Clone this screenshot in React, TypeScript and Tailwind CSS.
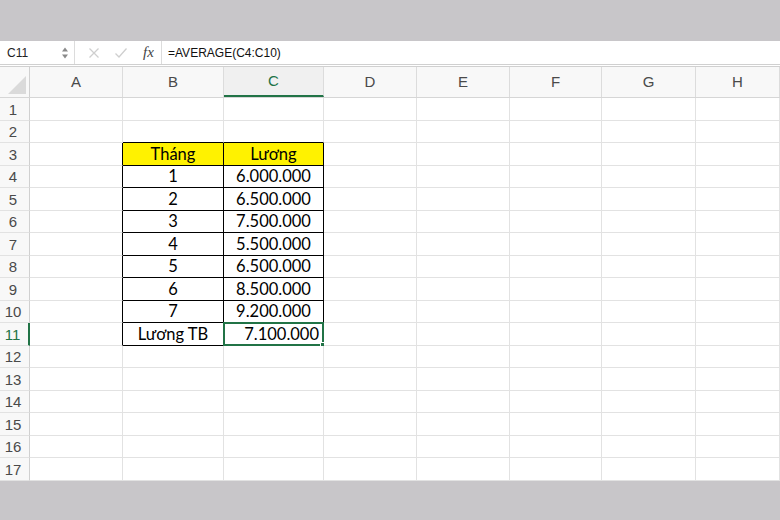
import React from "react";

const COLS = [
    { key: "A", w: "w-[93px]" },
    { key: "B", w: "w-[101px]" },
    { key: "C", w: "w-[100px]" },
    { key: "D", w: "w-[93px]" },
    { key: "E", w: "w-[93px]" },
    { key: "F", w: "w-[92px]" },
    { key: "G", w: "w-[94px]" },
    { key: "H", w: "flex-1" },
];

const DATA: Record<number, [string, string]> = {
    3: ["Tháng", "Lương"],
    4: ["1", "6.000.000"],
    5: ["2", "6.500.000"],
    6: ["3", "7.500.000"],
    7: ["4", "5.500.000"],
    8: ["5", "6.500.000"],
    9: ["6", "8.500.000"],
    10: ["7", "9.200.000"],
    11: ["Lương TB", "7.100.000"],
};

const inTable = (r: number) => r >= 3 && r <= 11;

function Cell({ row, col }: { row: number; col: string }) {
    const w = COLS.find((c) => c.key === col)!.w;
    const rightBlack = inTable(row) && (col === "A" || col === "B" || col === "C");
    const bottomBlack = row >= 2 && row <= 11 && (col === "B" || col === "C");
    const yellow = row === 3 && (col === "B" || col === "C");
    const selected = row === 11 && col === "C";
    let text = "";
    if (DATA[row] && col === "B") text = DATA[row][0];
    if (DATA[row] && col === "C") text = DATA[row][1];
    const align = selected ? "justify-end pr-[4px]" : "justify-center";

    return (
        <div
            className={`relative h-full shrink-0 flex items-end pb-[1px] ${align} border-r border-b ${w} ${
                rightBlack ? "border-r-black" : "border-r-[#e2e2e2]"
            } ${bottomBlack ? "border-b-black" : "border-b-[#e2e2e2]"} ${yellow ? "bg-[#fff200]" : "bg-white"}`}
        >
            <span className="text-[16.5px] leading-[20px] text-black">{text}</span>
            {selected && (
                <div className="absolute -left-[1px] -top-[1px] -right-[1px] -bottom-[1px] border-2 border-[#217346]">
                    <div className="absolute -right-[4px] -bottom-[4px] w-[6px] h-[6px] bg-[#217346] border border-white" />
                </div>
            )}
        </div>
    );
}

export default function App() {
    const rows = Array.from({ length: 17 }, (_, i) => i + 1);

    return (
        <div className="w-[780px] h-[520px] bg-[#c8c6c9] flex flex-col overflow-hidden [font-family:Lato,'Noto_Sans',sans-serif]">
            <div className="h-[41px] shrink-0" />

            {/* formula bar */}
            <div className="h-[23px] shrink-0 bg-white flex items-center border-b-[3px] border-double border-[#d0d0d0] box-content">
                <div className="w-[75px] h-full flex items-center justify-between pl-[7px] pr-[5px] border-r border-[#dcdcdc]">
                    <span className="text-[12px] text-[#222] [font-family:'Liberation_Sans',sans-serif]">C11</span>
                    <svg width="8" height="14" viewBox="0 0 8 14">
                        <path d="M1 5.5 L4 1.5 L7 5.5 Z" fill="#8a8a8a" />
                        <path d="M1 8.5 L4 12.5 L7 8.5 Z" fill="#8a8a8a" />
                    </svg>
                </div>
                <div className="w-[87px] h-full flex items-center pl-[13px] gap-[14px] border-r border-[#dcdcdc]">
                    <svg width="12" height="12" viewBox="0 0 12 12">
                        <path d="M1.5 1.5 L10.5 10.5 M10.5 1.5 L1.5 10.5" stroke="#cfcfcf" strokeWidth="1.3" />
                    </svg>
                    <svg width="14" height="12" viewBox="0 0 14 12">
                        <path d="M1.5 6.5 L5 10 L12.5 1.5" stroke="#cfcfcf" strokeWidth="1.3" fill="none" />
                    </svg>
                    <span className="text-[15px] italic text-[#444] [font-family:'Liberation_Serif',serif] ml-[1px]">fx</span>
                </div>
                <span className="pl-[6px] text-[12px] text-[#111] [font-family:'Liberation_Sans',sans-serif]">=AVERAGE(C4:C10)</span>
            </div>

            {/* column header */}
            <div className="h-[31px] shrink-0 flex bg-[#f8f8f8] border-b border-[#d6d6d6] [font-family:'Liberation_Sans',sans-serif]">
                <div className="w-[30px] shrink-0 relative border-r border-[#d0d0d0]">
                    <div className="absolute right-[3px] bottom-[3px] w-0 h-0 border-l-[18px] border-l-transparent border-b-[18px] border-b-[#dadada]" />
                </div>
                {COLS.map((c) => (
                    <div
                        key={c.key}
                        className={`${c.w} shrink-0 flex items-center justify-center text-[15px] border-r border-[#dcdcdc] ${
                            c.key === "C"
                                ? "text-[#217346] bg-[#f0f0f0] border-b-2 border-b-[#217346]"
                                : "text-[#4a4a4a]"
                        }`}
                    >
                        {c.key}
                    </div>
                ))}
            </div>

            {/* rows */}
            <div className="flex flex-col bg-white">
                {rows.map((r) => (
                    <div key={r} className="h-[22.5px] flex">
                        <div
                            className={`w-[30px] shrink-0 flex items-end justify-center pr-[3px] pb-[1px] text-[15px] leading-[19px] bg-[#f8f8f8] border-b border-b-[#e2e2e2] [font-family:'Liberation_Sans',sans-serif] ${
                                r === 11
                                    ? "text-[#217346] border-r-2 border-r-[#217346] bg-[#f0f0f0]"
                                    : "text-[#4a4a4a] border-r border-r-[#d0d0d0]"
                            }`}
                        >
                            {r}
                        </div>
                        {COLS.map((c) => (
                            <Cell key={c.key} row={r} col={c.key} />
                        ))}
                    </div>
                ))}
            </div>
        </div>
    );
}
